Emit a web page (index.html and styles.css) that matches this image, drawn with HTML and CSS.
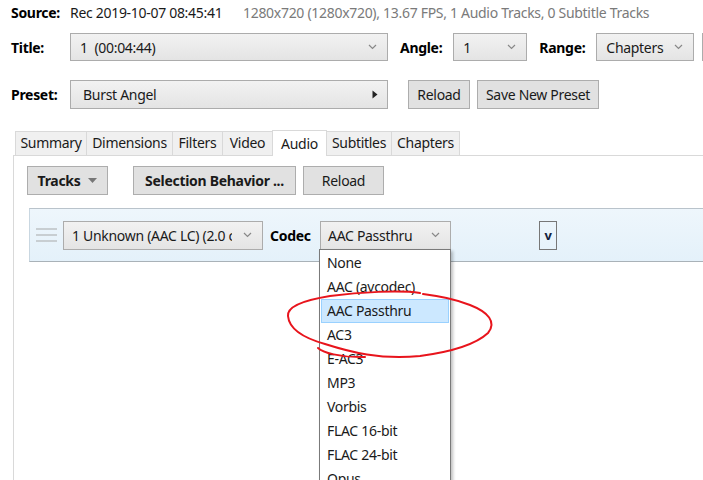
FILE: index.html
```html
<!DOCTYPE html>
<html>
<head>
<meta charset="utf-8">
<link rel="stylesheet" href="styles.css">
</head>
<body>
<div class="app">
  <div class="row source-row">
    <span class="label">Source:</span>
    <span class="src-name">Rec 2019-10-07 08:45:41</span>
    <span class="src-info">1280x720 (1280x720), 13.67 FPS, 1 Audio Tracks, 0 Subtitle Tracks</span>
  </div>

  <div class="row title-row">
    <span class="label">Title:</span>
    <div class="combo combo-title"><span>1&nbsp; (00:04:44)</span><svg class="chev" width="9" height="6" viewBox="0 0 9 6"><polyline points="1,1 4.5,4.5 8,1" fill="none" stroke="#888" stroke-width="1.2"/></svg></div>
    <span class="label label-angle">Angle:</span>
    <div class="combo combo-angle"><span>1</span><svg class="chev" width="9" height="6" viewBox="0 0 9 6"><polyline points="1,1 4.5,4.5 8,1" fill="none" stroke="#888" stroke-width="1.2"/></svg></div>
    <span class="label label-range">Range:</span>
    <div class="combo combo-range"><span>Chapters</span><svg class="chev" width="9" height="6" viewBox="0 0 9 6"><polyline points="1,1 4.5,4.5 8,1" fill="none" stroke="#888" stroke-width="1.2"/></svg></div>
    <div class="combo combo-extra"></div>
  </div>

  <div class="row preset-row">
    <span class="label">Preset:</span>
    <div class="combo combo-preset"><span>Burst Angel</span><svg class="tri" width="6" height="9" viewBox="0 0 6 9"><polygon points="0.5,0.5 5.5,4.5 0.5,8.5" fill="#222"/></svg></div>
    <button class="btn btn-reload">Reload</button>
    <button class="btn btn-save">Save New Preset</button>
  </div>

  <div class="tabs">
    <div class="tab t-summary">Summary</div>
    <div class="tab t-dim">Dimensions</div>
    <div class="tab t-filters">Filters</div>
    <div class="tab t-video">Video</div>
    <div class="tab active t-audio">Audio</div>
    <div class="tab t-subs">Subtitles</div>
    <div class="tab t-chap">Chapters</div>
  </div>

  <div class="panel">
    <div class="toolbar">
      <button class="btn btn-bold btn-tracks">Tracks <svg width="9" height="5" viewBox="0 0 9 5"><polygon points="0,0 9,0 4.5,5" fill="#777"/></svg></button>
      <button class="btn btn-bold btn-sel">Selection Behavior ...</button>
      <button class="btn btn-reload2">Reload</button>
    </div>

    <div class="track">
      <div class="handle"><i></i><i></i><i></i></div>
      <div class="combo combo-track"><span class="clip">1 Unknown (AAC LC) (2.0 ch)</span><svg class="chev" width="9" height="6" viewBox="0 0 9 6"><polyline points="1,1 4.5,4.5 8,1" fill="none" stroke="#888" stroke-width="1.2"/></svg></div>
      <span class="codec-label">Codec</span>
      <div class="combo combo-codec"><span>AAC Passthru</span><svg class="chev" width="9" height="6" viewBox="0 0 9 6"><polyline points="1,1 4.5,4.5 8,1" fill="none" stroke="#888" stroke-width="1.2"/></svg></div>
      <div class="vbtn">v</div>
    </div>
  </div>

  <ul class="dropdown">
    <li>None</li>
    <li>AAC (avcodec)</li>
    <li class="hl">AAC Passthru</li>
    <li>AC3</li>
    <li>E-AC3</li>
    <li>MP3</li>
    <li>Vorbis</li>
    <li>FLAC 16-bit</li>
    <li>FLAC 24-bit</li>
    <li>Opus</li>
  </ul>

  <svg class="circle" width="703" height="480" viewBox="0 0 703 480">
    <path d="M420,293 C400,290 360,292 330,296 C305,300 287,306 288,316 C289,328 300,337 325,344 C350,352 380,360 420,356 C450,352 475,345 488,333 C497,322 488,312 470,305 C455,299 440,296 423,294 M365,357 C340,358 322,352 318,348" fill="none" stroke="#e8141c" stroke-width="2" stroke-linecap="round"/>
  </svg>
</div>
</body>
</html>
```

FILE: styles.css
```css
* { box-sizing: border-box; }
html, body { margin: 0; padding: 0; background: #fff; }
body {
  font-family: "Noto Sans", "Open Sans", sans-serif;
  font-size: 14px;
  letter-spacing: -0.3px;
  color: #1a1a1a;
  width: 703px;
  height: 480px;
  overflow: hidden;
}
.app { position: relative; width: 703px; height: 480px; }

.row { display: flex; align-items: center; padding-left: 11px; }
.label { font-weight: 700; width: 59px; flex: none; color: #000; }

.source-row { height: 24px; }
.src-name { width: 173px; flex: none; }
.src-info { color: #7a7a7a; white-space: nowrap; }

.title-row { margin-top: 9px; height: 28px; }
.combo {
  position: relative;
  display: flex;
  align-items: center;
  height: 28px;
  border: 1px solid #acacac;
  background: linear-gradient(#f2f2f2, #e4e4e4);
  padding-left: 9px;
  flex: none;
  white-space: nowrap;
  overflow: hidden;
}
.combo .chev { position: absolute; right: 10px; top: 10px; }
.combo-title { width: 318px; }
.label-angle { width: auto; margin-left: 12px; margin-right: 11px; }
.combo-angle { width: 74px; }
.label-range { width: auto; margin-left: 12px; margin-right: 11px; }
.combo-range { width: 98px; }
.combo-extra { width: 20px; margin-left: 8px; }

.preset-row { margin-top: 19px; height: 29px; }
.combo-preset { width: 318px; height: 29px; padding-left: 12px; }
.combo-preset .tri { position: absolute; right: 9px; top: 9px; }

.btn {
  font-family: inherit;
  font-size: 14px;
  letter-spacing: -0.3px;
  color: #1a1a1a;
  height: 29px;
  border: 1px solid #adadad;
  background: #e1e1e1;
  padding: 0;
  flex: none;
}
.btn-reload { width: 62px; margin-left: 20px; }
.btn-save { width: 122px; margin-left: 7px; }

.tabs { display: flex; margin-top: 21px; padding-left: 15px; height: 25px; align-items: flex-end; }
.tab {
  height: 24px;
  border: 1px solid #d9d9d9;
  border-bottom: none;
  margin-right: -1px;
  background: #f0f0f0;
  text-align: center;
  line-height: 22px;
  color: #1a1a1a;
  flex: none;
}
.t-summary { width: 72px; }
.t-dim { width: 87px; }
.t-filters { width: 51px; }
.t-video { width: 51px; }
.t-audio { width: 55px; }
.t-subs { width: 66px; }
.t-chap { width: 69px; }
.tab.active { height: 26px; background: #fff; line-height: 25px; position: relative; z-index: 1; margin-bottom: -1px; }

.panel {
  margin-left: 13px;
  border-left: 1px solid #d9d9d9;
  border-top: 1px solid #d9d9d9;
  height: 330px;
  padding-top: 10px;
}
.toolbar { display: flex; padding-left: 13px; }
.btn-bold { font-weight: 700; }
.btn-tracks { width: 81px; height: 29px; display: flex; align-items: center; justify-content: center; gap: 8px; }
.btn-sel { width: 163px; margin-left: 25px; }
.btn-reload2 { width: 81px; margin-left: 7px; }

.track {
  margin-top: 13px;
  margin-left: 15px;
  height: 54px;
  border-top: 1px solid #b9c3cb;
  border-bottom: 1px solid #a9b2b8;
  border-left: 1px solid #c9d7e1;
  background: linear-gradient(#eef6fc, #e4f1fa);
  display: flex;
  align-items: center;
  padding-left: 6px;
}
.handle { width: 21px; display: flex; flex-direction: column; gap: 4px; margin-right: 6px; }
.handle i { display: block; height: 2px; background: #c8ced2; }
.combo-track { width: 200px; height: 29px; padding-left: 8px; }
.combo-track .clip { display: block; width: 160px; overflow: hidden; }
.codec-label { font-weight: 700; margin-left: 7px; width: 50px; color: #000; }
.combo-codec { width: 131px; height: 29px; padding-left: 7px; }
.vbtn {
  margin-left: 88px;
  width: 18px;
  height: 29px;
  border: 1px solid #777;
  font-weight: 700;
  font-size: 13px;
  color: #12203a;
  display: flex;
  align-items: center;
  justify-content: center;
}

.dropdown {
  position: absolute;
  left: 319px;
  top: 249px;
  width: 132px;
  height: 240px;
  margin: 0;
  padding: 1px 1px 0;
  list-style: none;
  background: #fff;
  border: 1px solid #7a7a7a;
  box-shadow: 2px 2px 3px rgba(0,0,0,0.25);
  z-index: 5;
}
.dropdown li { height: 24px; line-height: 24px; padding-left: 6px; white-space: nowrap; }
.dropdown li.hl { background: #cce8ff; border: 1px solid #99d1ff; line-height: 22px; padding-left: 5px; }

.circle { position: absolute; left: 0; top: 0; z-index: 6; pointer-events: none; }
```
